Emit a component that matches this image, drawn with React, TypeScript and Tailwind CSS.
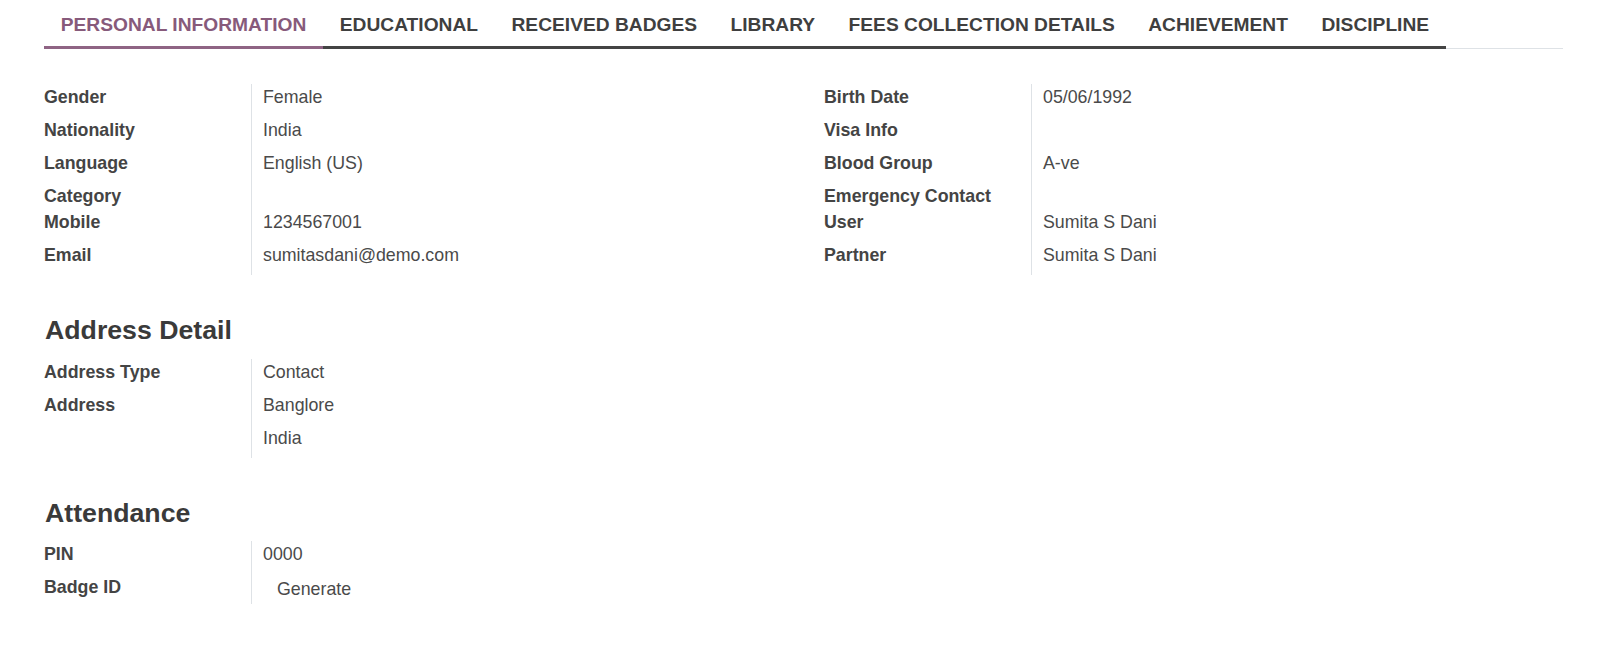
const tabs = [
  "Personal Information",
  "Educational",
  "Received Badges",
  "Library",
  "Fees Collection Details",
  "Achievement",
  "Discipline",
];

type Row = { label: string; value?: string[]; button?: string };

const leftRows: Row[] = [
  { label: "Gender", value: ["Female"] },
  { label: "Nationality", value: ["India"] },
  { label: "Language", value: ["English (US)"] },
  { label: "Category" },
  { label: "Mobile", value: ["1234567001"] },
  { label: "Email", value: ["sumitasdani@demo.com"] },
];

const rightRows: Row[] = [
  { label: "Birth Date", value: ["05/06/1992"] },
  { label: "Visa Info", value: [""] },
  { label: "Blood Group", value: ["A-ve"] },
  { label: "Emergency Contact" },
  { label: "User", value: ["Sumita S Dani"] },
  { label: "Partner", value: ["Sumita S Dani"] },
];

const addressRows: Row[] = [
  { label: "Address Type", value: ["Contact"] },
  { label: "Address", value: ["Banglore", "India"] },
];

const attendanceRows: Row[] = [
  { label: "PIN", value: ["0000"] },
  { label: "Badge ID", button: "Generate" },
];

function FieldGroup({ rows }: { rows: Row[] }) {
  return (
    <div className="grid grid-cols-[208px_1fr]">
      <div className="flex flex-col border-r border-[#dee2e6]">
        {rows.map((r) => (
          <div
            key={r.label}
            className={`${r.value && r.value.length > 1 ? "h-[66px]" : r.value ? "h-[33px]" : r.button ? "h-[30px]" : "h-[26.8px]"} font-bold text-[#444444] leading-[26.7px]`}
          >
            {r.label}
          </div>
        ))}
      </div>
      <div className="flex flex-col pl-[11px] text-[#4a4a4a]">
        {rows.map((r) =>
          r.value ? (
            r.value.map((v, i) => (
              <div key={r.label + i} className="h-[33px] leading-[26.7px]">
                {v}
              </div>
            ))
          ) : r.button ? (
            <div key={r.label} className="h-[30px] leading-[26.7px] pl-[14px] pt-[2px]">
              {r.button}
            </div>
          ) : (
            <div key={r.label} className="h-[26.8px]" />
          )
        )}
      </div>
    </div>
  );
}

export default function App() {
  return (
    <div className="min-h-[670px] bg-white px-[44px] font-['Liberation_Sans',Arial,sans-serif] text-[17.8px]">
      <nav className="flex w-[1519px] border-b border-[#dee2e6] h-[49px]">
        {tabs.map((t, i) => (
          <div
            key={t}
            className={`-mb-px border-b-[3px] px-[16.75px] pt-[13.5px] pb-[10.5px] text-[19.2px] font-bold uppercase leading-[22px] whitespace-nowrap ${
              i === 0 ? "border-[#8f6484] text-[#875a7b]" : "border-[#444444] text-[#3f3f3f]"
            }`}
          >
            {t}
          </div>
        ))}
      </nav>

      <div className="grid grid-cols-[780px_780px] pt-[34.5px]">
        <FieldGroup rows={leftRows} />
        <FieldGroup rows={rightRows} />
      </div>

      <h2 className="mt-[39px] pl-px text-[26.7px] font-bold leading-[32px] text-[#3a3a3a]">
        Address Detail
      </h2>
      <div className="mt-[12.5px] w-[780px]">
        <FieldGroup rows={addressRows} />
      </div>

      <h2 className="mt-[39px] pl-px text-[26.7px] font-bold leading-[32px] text-[#3a3a3a]">
        Attendance
      </h2>
      <div className="mt-[12.5px] w-[780px]">
        <FieldGroup rows={attendanceRows} />
      </div>
    </div>
  );
}
